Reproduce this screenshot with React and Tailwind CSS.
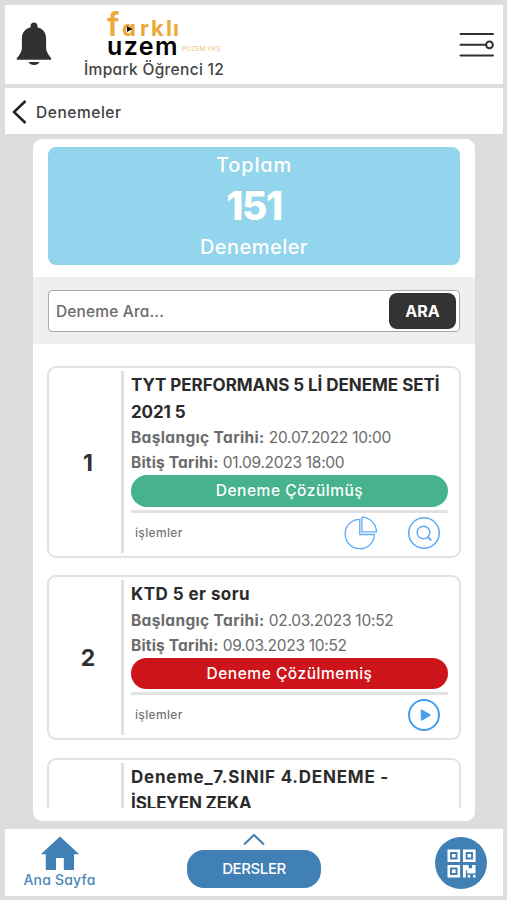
import React from "react";

const exams = [
  {
    id: 1,
    title: "TYT PERFORMANS 5 Lİ DENEME SETİ",
    titleEnd: "2021 5",
    start: "20.07.2022 10:00",
    end: "01.09.2023 18:00",
    solved: true,
    spacing: "tracking-[-0.040px]",
  },
  {
    id: 2,
    title: "KTD 5 er soru",
    start: "02.03.2023 10:52",
    end: "09.03.2023 10:52",
    solved: false,
    spacing: "tracking-[0.450px]",
  },
  {
    title: "Deneme_7.SINIF 4.DENEME -",
    titleEnd: "İŞLEYEN ZEKA",
    spacing: "tracking-[0.780px]",
  },
];

function BellIcon() {
  return (
    <svg className="h-[44px] w-[36px]" viewBox="0 0 36 44" fill="#303030">
      <path d="M18 .500c-2 0-3.400 1.500-3.400 3.300v1.400C9 6.500 5.900 10.800 5.900 16.500v9.500c0 3.500-2 6.500-5 10.300-.5.700-.3 1.500.6 1.500h33c.9 0 1.100-.8.600-1.500-3-3.800-5-6.800-5-10.300v-9.500c0-5.700-3.100-10-8.700-11.300V3.800C21.400 2 20 .500 18 .500z" />
      <path d="M12.500 40h11c-.9 2-2.900 3-5.500 3s-4.600-1-5.500-3z" />
    </svg>
  );
}

function MenuIcon() {
  return (
    <svg className="h-[26px] w-[36px]" viewBox="0 0 36 26" fill="none" stroke="#303030" strokeWidth="2" strokeLinecap="round">
      <path d="M1.500 2h32.500M1.500 12.800h25M1.500 23.500h32.500" />
      <circle cx="30.500" cy="12.800" r="3.400" />
    </svg>
  );
}

function PieIcon() {
  return (
    <svg className="h-[34px] w-[34px]" viewBox="0 0 34 34" fill="none" stroke="#61adf2" strokeWidth="1.300">
      <path d="M15.800 3.300A14.700 14.700 0 1 0 30.500 18.500H15.800z" />
      <path d="M17.900 1.200A15 15 0 0 1 32.500 15.900H17.900z" />
    </svg>
  );
}

function SearchIcon() {
  return (
    <svg className="h-[34px] w-[34px]" viewBox="0 0 34 34" fill="none" stroke="#61adf2" strokeWidth="1.500">
      <circle cx="17" cy="17" r="15.300" />
      <circle cx="16.500" cy="16.500" r="6.300" />
      <path d="M20.800 20.800l3.400 3.800" strokeWidth="2" />
    </svg>
  );
}

function PlayIcon() {
  return (
    <svg className="h-[34px] w-[34px]" viewBox="0 0 34 34">
      <circle cx="17" cy="17" r="15" fill="none" stroke="#469fe9" strokeWidth="2" />
      <path d="M14.300 11.800v10.600l9.300-5.300z" fill="#469fe9" stroke="#469fe9" strokeWidth="1" strokeLinejoin="round" />
    </svg>
  );
}

function HomeIcon() {
  return (
    <svg className="h-[34px] w-[40px]" viewBox="0 0 40 34" fill="#4180b5">
      <path d="M20 .500L.800 18.200h5V34h10.200V22h7.800v12H34V18.200h5.200z" />
    </svg>
  );
}

function QrIcon() {
  return (
    <svg className="h-[29px] w-[29px]" viewBox="0 0 29 29">
      <g fill="none" stroke="#fff" strokeWidth="2.600">
        <path d="M1.800 1.800h10v10h-10zM17.300 1.800h10v10h-10zM1.800 17.300h10v10h-10z" />
      </g>
      <g fill="#fff">
        <path d="M5 5h3.600v3.600H5zM20.500 5h3.600v3.600h-3.600zM5 20.500h3.600v3.600H5z" />
        <path d="M16 16h5.700v3.200h3.400V16h3.400v8.500h-8.300v-3.200h-1.400v7.200H16zM20.700 26h2.500v2.500h-2.500zM26 26h2.500v2.500H26z" />
      </g>
    </svg>
  );
}

function Logo() {
  return (
    <div className="relative ml-[23px] mt-[6px] h-[45px]">
      <div className="flex h-[27px] items-baseline font-bold text-[#eba93a]">
        <span className="w-[15px] text-[32px] font-semibold leading-[28px]">f</span>
        <span className="w-[18px] text-[22px] leading-[28px]">a</span>
        <span className="w-[11px] text-[22px] leading-[28px]">r</span>
        <span className="w-[15px] text-[22px] leading-[28px]">k</span>
        <span className="w-[7px] text-[22px] leading-[28px]">l</span>
        <span className="text-[22px] leading-[28px]">ı</span>
      </div>
      <svg className="absolute left-[20px] top-[15px] h-[6px] w-[6px]" viewBox="0 0 6 6">
        <path d="M0 0v6l5.500-3z" fill="#111" />
      </svg>
      <div className="flex items-start">
        <span className="w-[75px] text-[25px] font-semibold leading-[16px] tracking-[1.400px] text-black">uzem</span>
        <span className="whitespace-nowrap pt-[7px] text-[6.500px] leading-[8px] tracking-[0.100px] text-[#f0be78]">
          PUZEM YKS
        </span>
      </div>
    </div>
  );
}

function Header() {
  return (
    <header className="flex h-[79px] shrink-0 bg-white">
      <div className="pl-[11px] pt-[17px]">
        <BellIcon />
      </div>
      <div className="ml-[32px] w-[200px]">
        <Logo />
        <div className="mt-[2px] text-[15.500px] font-medium leading-[24px] tracking-[0.320px] text-[#444]">
          İmpark Öğrenci 12
        </div>
      </div>
      <div className="ml-auto pr-[8px] pt-[27px]">
        <MenuIcon />
      </div>
    </header>
  );
}

function ExamCard({ exam }) {
  return (
    <div className="flex min-h-[120px] rounded-[9px] border-2 border-[#e2e2e2] p-[3px]">
      <div className="flex w-[70px] shrink-0 items-center justify-center pl-[2px] pt-[2px] text-[23px] font-bold text-[#303030]">
        {exam.id}
      </div>
      <div className="ml-[-1px] w-[3px] shrink-0 bg-[#e0e0e0]" />
      <div className="ml-[7px] w-[317px] pt-px">
        <h2 className="whitespace-nowrap text-[17px] font-bold leading-[26.500px] text-[#2b2b2b]">
          <span className={exam.spacing}>{exam.title}</span>
          {exam.titleEnd && <span className="block tracking-[-0.120px]">{exam.titleEnd}</span>}
        </h2>
        {exam.start && (
          <>
            <p className="whitespace-nowrap text-[15.500px] leading-[25px] tracking-[-0.250px] text-[#6b6b6b]">
              <b className="font-bold tracking-[0.350px]">Başlangıç Tarihi:</b> {exam.start}
            </p>
            <p className="whitespace-nowrap text-[15.500px] leading-[25px] tracking-[-0.280px] text-[#6b6b6b]">
              <b className="font-bold tracking-[0.180px]">Bitiş Tarihi:</b> {exam.end}
            </p>
            <div
              className={`flex h-[31.500px] items-center justify-center rounded-full text-[15.500px] font-medium tracking-[0.530px] text-white ${
                exam.solved ? "bg-[#46b28e]" : "bg-[#ce141b]"
              }`}
            >
              {exam.solved ? "Deneme Çözülmüş" : "Deneme Çözülmemiş"}
            </div>
            <div className="mt-[3px] flex h-[43px] items-center border-t-[3px] border-[#e2e2e2] pl-[4px] pr-[7px]">
              <span className="text-[12px] font-medium tracking-[0.350px] text-[#777]">işlemler</span>
              <div className="ml-auto flex gap-[29px]">
                {exam.solved ? (
                  <>
                    <PieIcon />
                    <SearchIcon />
                  </>
                ) : (
                  <PlayIcon />
                )}
              </div>
            </div>
          </>
        )}
      </div>
    </div>
  );
}

function Footer() {
  return (
    <footer className="mt-[8px] flex h-[67px] shrink-0 bg-white">
      <div className="flex w-[109px] flex-col items-center pt-[7px]">
        <HomeIcon />
        <span className="whitespace-nowrap text-[14px] font-medium leading-[20px] tracking-[0.200px] text-[#4b87b9]">
          Ana Sayfa
        </span>
      </div>
      <div className="ml-[73px] flex w-[134px] flex-col items-center pt-[3px]">
        <svg className="h-[14px] w-[24px]" viewBox="0 0 24 14" fill="none" stroke="#4180b5" strokeWidth="2">
          <path d="M2 12.500L12 3l10 9.500" />
        </svg>
        <button className="mt-[4px] h-[38px] w-full rounded-[17px] bg-[#4180b5] text-[15px] font-medium tracking-[-0.400px] text-white">
          DERSLER
        </button>
      </div>
      <div className="ml-auto mr-[16px] mt-[8px] flex h-[52px] w-[52px] items-center justify-center rounded-full bg-[#4180b5]">
        <QrIcon />
      </div>
    </footer>
  );
}

export default function App() {
  return (
    <div className="flex h-[900px] w-[507px] flex-col overflow-hidden bg-[#dddddd] pb-[4px] pl-[5px] pr-[4px] pt-[5px] font-['Inter','Noto_Sans',sans-serif] [font-feature-settings:'cv11']">
      <Header />
      <nav className="mt-[4px] flex h-[46px] shrink-0 items-center bg-white pl-[7px] pt-[2px]">
        <svg className="h-[24px] w-[15px]" viewBox="0 0 15 24" fill="none" stroke="#222" strokeWidth="2.500">
          <path d="M13.500 1L2 12l11.500 11" />
        </svg>
        <span className="ml-[9px] pt-px text-[15.500px] font-medium tracking-[0.550px] text-[#404040]">Denemeler</span>
      </nav>

      <main className="ml-[28px] mt-[5px] flex h-[682px] w-[442px] shrink-0 flex-col rounded-[9px] bg-white pt-[8px]">
        <section className="mx-[15px] flex h-[118px] flex-col items-center rounded-[8px] bg-[#92d5ec] text-white">
          <div className="pt-[5px] text-[20px] font-medium leading-[26px] tracking-[0.850px]">Toplam</div>
          <div className="text-[39px] font-extrabold leading-[56px] tracking-[-1.500px]">151</div>
          <div className="text-[20px] font-medium leading-[26px] tracking-[0.450px]">Denemeler</div>
        </section>

        <div className="mt-[12px] h-[67px] bg-[#efefef] px-[15px] pt-[13px]">
          <div className="flex h-[42px] items-center rounded-[4px] border border-[#aaa] bg-white pl-[7px] pr-[3px]">
            <span className="pt-[2px] text-[15.500px] font-medium tracking-[0.150px] text-[#6b6b6b]">Deneme Ara...</span>
            <button className="ml-auto h-[36px] w-[67px] rounded-[8px] bg-[#333] text-[16px] font-bold text-white">
              ARA
            </button>
          </div>
        </div>

        <div className="h-[464px] overflow-hidden px-[14px] pt-[22px]">
          <div className="flex flex-col gap-[17.500px]">
            {exams.map((exam, i) => (
              <ExamCard key={i} exam={exam} />
            ))}
          </div>
        </div>
      </main>

      <Footer />
    </div>
  );
}
